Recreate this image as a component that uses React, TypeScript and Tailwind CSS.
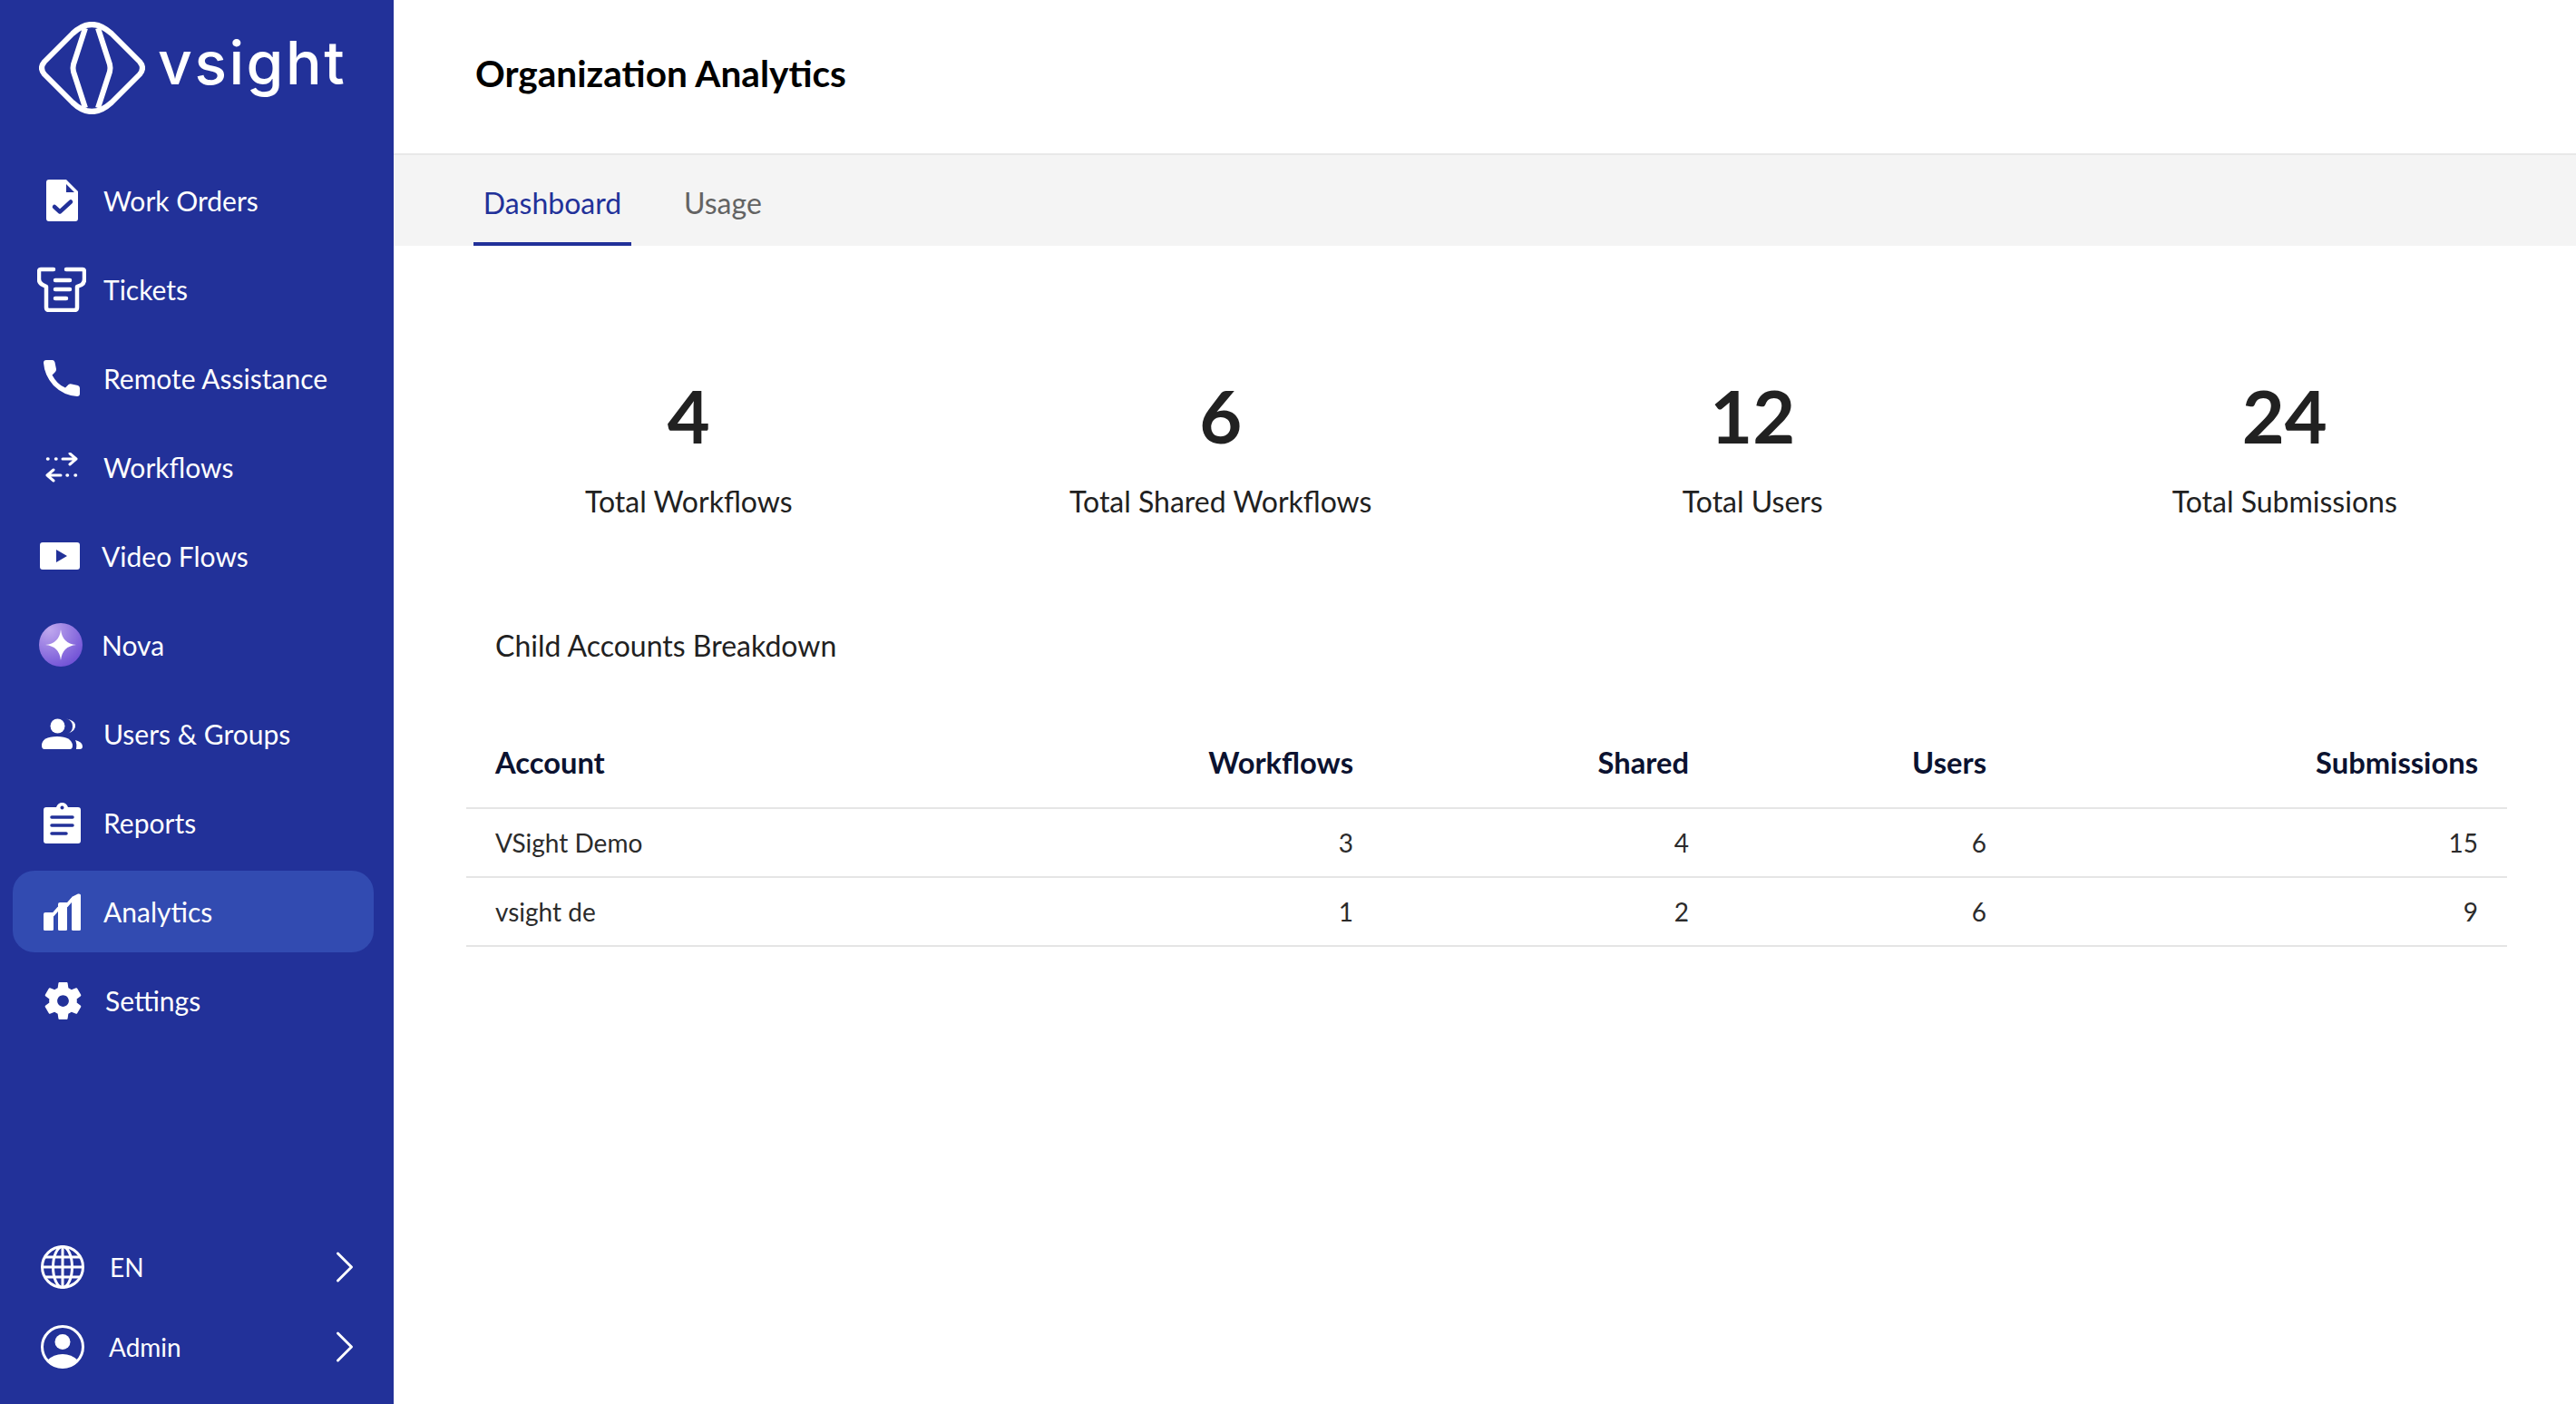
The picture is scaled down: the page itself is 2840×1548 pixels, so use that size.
import React from "react"
import { ChevronRight } from "lucide-react"

const lato = "font-['Lato','Liberation_Sans',sans-serif]"

const LogoMark = () => (
    <svg viewBox="0 0 117 102" className="w-[117px] h-[102px]" fill="none" stroke="white" strokeWidth="6" strokeLinejoin="round">
        <path d="M6 44L37 13Q58 -7 80 13L111 44Q117 51 111 58L80 89Q58 109 37 89L6 58Q0 51 6 44Z" />
        <path d="M51 7L38 47Q37 51 38 55L51 95" />
        <path d="M65 7L78 47Q79 51 78 55L65 95" />
    </svg>
)

const WorkOrdersIcon = () => (
    <svg viewBox="0 0 35 46" className="w-[35px] h-[46px]" fill="white">
        <path fillRule="evenodd" d="M3 0H22L35 13V43a3 3 0 0 1-3 3H3a3 3 0 0 1-3-3V3a3 3 0 0 1 3-3ZM22 5V14H31Z" />
        <path d="M9 30L15 35.500L27 24.500" fill="none" stroke="#223199" strokeWidth="4.500" strokeLinecap="round" strokeLinejoin="round" />
    </svg>
)

const TicketsIcon = () => (
    <svg viewBox="0 0 54 50" className="w-[54px] h-[50px]" fill="none" stroke="white" strokeWidth="4.500" strokeLinejoin="round" strokeLinecap="round">
        <path d="M18 3H4Q2 3 2 6V14Q2 18 6 20L10 22V45Q10 48 13 48H41Q44 48 44 45V22L49 20Q52 18 52 14V6Q52 3 50 3H32" />
        <path d="M20 15H36M20 25H36M20 35H32" strokeWidth="4.500" />
    </svg>
)

const PhoneIcon = () => (
    <svg viewBox="0 0 40 40" className="w-[40px] h-[40px]" fill="white">
        <path d="M3 0H10Q12 0 12.500 2.500L14 10Q14 12 13 13L9.500 16.500Q15 27 24 30.500L27.500 27Q29 26 31 26.500L38 28Q40 29 40 31V37Q40 40 37 40Q22 39 11 28Q1 17 0 3Q0 0 3 0Z" />
    </svg>
)

const WorkflowsIcon = () => (
    <svg viewBox="0 0 36 33" className="w-[36px] h-[33px]" fill="none" stroke="white" strokeWidth="3" strokeLinecap="round" strokeLinejoin="round">
        <path d="M19 7H34M27 1L34 7L27 13" />
        <path d="M2 25H17M9 19L2 25L9 31" />
        <path d="M2.500 7H3M11.500 7H12M24 25H24.500M33 25H33.500" strokeWidth="3.500" />
    </svg>
)

const VideoIcon = () => (
    <svg viewBox="0 0 44 30" className="w-[44px] h-[30px]" fill="white">
        <path fillRule="evenodd" d="M3 0H41a3 3 0 0 1 3 3V27a3 3 0 0 1-3 3H3a3 3 0 0 1-3-3V3a3 3 0 0 1 3-3ZM18 8V22L30 15Z" />
    </svg>
)

const NovaIcon = () => (
    <svg viewBox="0 0 48 48" className="w-[48px] h-[48px]">
        <defs>
            <radialGradient id="nova" cx="0.25" cy="0.15" r="1">
                <stop offset="0" stopColor="#c0a8ee" />
                <stop offset="1" stopColor="#6a4bd4" />
            </radialGradient>
        </defs>
        <circle cx="24" cy="24" r="24" fill="url(#nova)" />
        <path d="M24 7Q25.500 22.500 41 24Q25.500 25.500 24 41Q22.500 25.500 7 24Q22.500 22.500 24 7Z" fill="white" />
    </svg>
)

const UsersIcon = () => (
    <svg viewBox="0 0 45 34" className="w-[45px] h-[34px]" fill="white">
        <circle cx="17.500" cy="8.500" r="8" />
        <path d="M0 30Q0 20 17 20Q33 20 34 30Q34 34 31 34H3Q0 34 0 30Z" />
        <path d="M27 0.500Q34 2 34 9Q34 15 28 17Q38 14 37 7Q36 2 27 0.500Z" />
        <path d="M37 24Q45 26 45 31Q45 34 42 34H38Q39 28 37 24Z" />
    </svg>
)

const ReportsIcon = () => (
    <svg viewBox="0 0 41 45" className="w-[41px] h-[45px]" fill="white">
        <path fillRule="evenodd" d="M3 5H14Q16 0 20.500 0Q25 0 27 5H38a3 3 0 0 1 3 3V42a3 3 0 0 1-3 3H3a3 3 0 0 1-3-3V8a3 3 0 0 1 3-3ZM20.500 3.500a2 2 0 1 0 .01 0Z" />
        <path d="M9 16H32M9 25H32M9 34H25" stroke="#223199" strokeWidth="3.500" strokeLinecap="round" />
    </svg>
)

const AnalyticsIcon = () => (
    <svg viewBox="0 0 41 41" className="w-[41px] h-[41px]" fill="white">
        <path d="M0 23Q0 21 2 21H11V39.500Q11 41 9.500 41H1.500Q0 41 0 39.500Z" />
        <path d="M16 12Q16 10 18 10H26V39.500Q26 41 24.500 41H17.500Q16 41 16 39.500Z" />
        <path d="M10 24L17 16M25 14L32 6" fill="none" stroke="white" strokeWidth="3.500" />
        <path d="M31 4L38 0.500Q41 0 41 2V39.500Q41 41 39.500 41H32.500Q31 41 31 39.500Z" />
    </svg>
)

const SettingsIcon = () => (
    <svg viewBox="0 0 24 24" className="w-[51px] h-[51px]" fill="white">
        <path d="M19.140 12.940c.04-.3.060-.61.060-.94 0-.32-.02-.64-.07-.94l2.030-1.580a.49.49 0 0 0 .12-.61l-1.920-3.320a.488.488 0 0 0-.59-.22l-2.390.96c-.5-.38-1.030-.7-1.620-.94l-.36-2.540a.484.484 0 0 0-.48-.41h-3.840c-.24 0-.43.170-.47.410l-.36 2.540c-.59.240-1.130.570-1.620.94l-2.390-.96c-.22-.080-.47 0-.59.220L2.740 8.870c-.12.210-.08.470.12.610l2.030 1.580c-.05.300-.09.630-.09.940s.02.640.07.940l-2.030 1.580a.49.49 0 0 0-.12.610l1.920 3.320c.12.220.37.290.59.220l2.390-.96c.5.380 1.030.7 1.620.94l.36 2.540c.05.240.24.410.48.410h3.840c.24 0 .44-.170.47-.41l.36-2.540c.59-.240 1.130-.560 1.620-.94l2.390.96c.22.080.47 0 .59-.22l1.920-3.320c.12-.220.070-.470-.12-.610l-2.010-1.580zM12 15c-1.650 0-3-1.350-3-3s1.350-3 3-3 3 1.350 3 3-1.350 3-3 3z" />
    </svg>
)

const GlobeIcon = () => (
    <svg viewBox="0 0 48 48" className="w-[48px] h-[48px]" fill="none" stroke="white" strokeWidth="3">
        <circle cx="24" cy="24" r="22.500" />
        <ellipse cx="24" cy="24" rx="10.500" ry="22.500" />
        <path d="M24 1.500V46.500M1.500 24H46.500M4.500 13H43.500M4.500 35H43.500" />
    </svg>
)

const AdminIcon = () => (
    <svg viewBox="0 0 48 48" className="w-[48px] h-[48px]">
        <circle cx="24" cy="24" r="22.500" fill="none" stroke="white" strokeWidth="3" />
        <circle cx="24" cy="18.500" r="8.500" fill="white" />
        <path d="M7 39Q14 32 24 32Q34 32 41 39Q34 46.500 24 46.500Q14 46.500 7 39Z" fill="white" />
    </svg>
)

const navItems = [
    { label: "Work Orders", icon: <WorkOrdersIcon />, text: "ml-[15px]", slot: "" },
    { label: "Tickets", icon: <TicketsIcon />, text: "ml-[15px]", slot: "" },
    { label: "Remote Assistance", icon: <PhoneIcon />, text: "ml-[15px]", slot: "" },
    { label: "Workflows", icon: <WorkflowsIcon />, text: "ml-[15px]", slot: "" },
    { label: "Video Flows", icon: <VideoIcon />, text: "ml-[13px]", slot: "pr-[4px]" },
    { label: "Nova", icon: <NovaIcon />, text: "ml-[13px]", slot: "pr-[2px]" },
    { label: "Users & Groups", icon: <UsersIcon />, text: "ml-[15px]", slot: "" },
    { label: "Reports", icon: <ReportsIcon />, text: "ml-[15px]", slot: "" },
    { label: "Analytics", icon: <AnalyticsIcon />, active: true, text: "ml-[15px]", slot: "" },
    { label: "Settings", icon: <SettingsIcon />, text: "ml-[17px]", slot: "pl-[2px]" },
]

const stats = [
    { value: "4", label: "Total Workflows" },
    { value: "6", label: "Total Shared Workflows" },
    { value: "12", label: "Total Users" },
    { value: "24", label: "Total Submissions" },
]

const rows = [
    { account: "VSight Demo", workflows: 3, shared: 4, users: 6, submissions: 15 },
    { account: "vsight de", workflows: 1, shared: 2, users: 6, submissions: 9 },
]

export default function App() {
    return (
        <div className={`flex h-[1548px] w-[2840px] overflow-hidden bg-white ${lato}`}>
            <aside className="flex h-full w-[434px] shrink-0 flex-col bg-[#223199] text-white">
                <div className="flex h-[176px] shrink-0 items-start pl-[43px] pt-[24px]">
                    <LogoMark />
                    <span className="ml-[14px] mt-[-5px] font-['Inter',sans-serif] text-[66px] font-medium tracking-[2.5px] leading-[100px]">vsight</span>
                </div>
                <nav className="flex flex-col gap-[8px] pl-[14px] pr-[22px]">
                    {navItems.map((item) => (
                        <a key={item.label} className={`flex h-[90px] items-center rounded-[24px] ${item.active ? "bg-[#324bb1]" : ""}`}>
                            <span className="flex w-[85px] shrink-0 items-center justify-end">
                                <span className={`flex w-[62px] justify-center ${item.slot}`}>{item.icon}</span>
                            </span>
                            <span className={`${item.text} text-[30px]`}>{item.label}</span>
                        </a>
                    ))}
                </nav>
                <div className="mt-auto flex flex-col gap-[40px] pb-[39px] pl-[45px] pr-[24px]">
                    <div className="flex h-[48px] items-center">
                        <GlobeIcon />
                        <span className="ml-[28px] text-[28px]">EN</span>
                        <ChevronRight className="ml-auto" size={60} strokeWidth={1.2} />
                    </div>
                    <div className="flex h-[48px] items-center">
                        <AdminIcon />
                        <span className="ml-[27px] text-[28px]">Admin</span>
                        <ChevronRight className="ml-auto" size={60} strokeWidth={1.2} />
                    </div>
                </div>
            </aside>

            <main className="flex min-w-0 flex-1 flex-col">
                <header className="flex h-[171px] shrink-0 items-center border-b-[2px] border-[#e8e8e8] pb-[6px] pl-[90px]">
                    <h1 className="text-[40.600px] font-bold text-black">Organization Analytics</h1>
                </header>
                <div className="flex h-[100px] shrink-0 items-stretch bg-[#f4f4f4] pl-[88px]">
                    <div className="flex w-[174px] items-center justify-center border-b-[4px] border-[#223199] pt-[9px] text-[32px] text-[#223199]">Dashboard</div>
                    <div className="ml-[58px] flex items-center pt-[5px] text-[32px] text-[#636363]">Usage</div>
                </div>

                <div className="pl-[32px] pr-[28px] pt-[139px]">
                    <div className="grid grid-cols-4">
                        {stats.map((s) => (
                            <div key={s.label} className="flex flex-col items-center text-[#212121]">
                                <div className="text-[81px] font-bold leading-[96px]">{s.value}</div>
                                <div className="mt-[27px] text-[32px] leading-[40px]">{s.label}</div>
                            </div>
                        ))}
                    </div>
                </div>

                <div className="pl-[80px] pr-[76px]">
                    <h2 className="mt-[115px] pl-[32px] text-[32px] leading-[48px] text-[#212121]">Child Accounts Breakdown</h2>
                    <table className="mt-[57px] w-[2250px] table-fixed border-collapse">
                        <colgroup>
                            <col className="w-[700px]" />
                            <col className="w-[310px]" />
                            <col className="w-[370px]" />
                            <col className="w-[328px]" />
                            <col className="w-[542px]" />
                        </colgroup>
                        <thead>
                            <tr className="h-[98px] border-b-[2px] border-[#e5e5e5] text-[32.700px] font-bold text-[#0b1230]">
                                <th className="px-[32px] pb-[2px] text-left font-bold">Account</th>
                                <th className="px-[32px] pb-[2px] text-right font-bold">Workflows</th>
                                <th className="px-[32px] pb-[2px] text-right font-bold">Shared</th>
                                <th className="px-[32px] pb-[2px] text-right font-bold">Users</th>
                                <th className="px-[32px] pb-[2px] text-right font-bold">Submissions</th>
                            </tr>
                        </thead>
                        <tbody>
                            {rows.map((r) => (
                                <tr key={r.account} className="h-[76px] border-b-[2px] border-[#e5e5e5] text-[28px] text-[#2b2b2b]">
                                    <td className="px-[32px]">{r.account}</td>
                                    <td className="px-[32px] text-right">{r.workflows}</td>
                                    <td className="px-[32px] text-right">{r.shared}</td>
                                    <td className="px-[32px] text-right">{r.users}</td>
                                    <td className="px-[32px] text-right">{r.submissions}</td>
                                </tr>
                            ))}
                        </tbody>
                    </table>
                </div>
            </main>
        </div>
    )
}
